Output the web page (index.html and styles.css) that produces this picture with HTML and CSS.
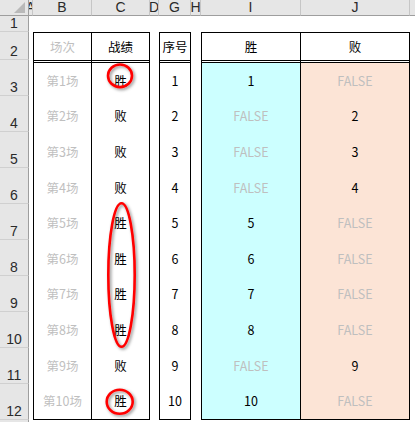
FILE: index.html
```html
<!DOCTYPE html>
<html lang="zh-CN">
<head>
<meta charset="utf-8">
<title>胜败统计</title>
<link rel="stylesheet" href="styles.css">
</head>
<body>
<div class="sheet">
  <div class="corner"><span class="tri"></span></div>
  <div class="colh">A</div>
  <div class="colh">B</div>
  <div class="colh">C</div>
  <div class="colh">D</div>
  <div class="colh">G</div>
  <div class="colh">H</div>
  <div class="colh">I</div>
  <div class="colh">J</div>
  <div class="colh last"></div>

  <div class="rowh">1</div>
  <div class="rowh">2</div>
  <div class="rowh">3</div>
  <div class="rowh">4</div>
  <div class="rowh">5</div>
  <div class="rowh">6</div>
  <div class="rowh">7</div>
  <div class="rowh">8</div>
  <div class="rowh">9</div>
  <div class="rowh">10</div>
  <div class="rowh">11</div>
  <div class="rowh">12</div>
  <div class="rowh end"></div>

  <div class="tbl t-bc">
    <div class="c head dim sep">场次</div><div class="c head">战绩</div>
    <div class="c dim sep">第1场</div><div class="c">胜</div>
    <div class="c dim sep">第2场</div><div class="c">败</div>
    <div class="c dim sep">第3场</div><div class="c">败</div>
    <div class="c dim sep">第4场</div><div class="c">败</div>
    <div class="c dim sep">第5场</div><div class="c">胜</div>
    <div class="c dim sep">第6场</div><div class="c">胜</div>
    <div class="c dim sep">第7场</div><div class="c">胜</div>
    <div class="c dim sep">第8场</div><div class="c">胜</div>
    <div class="c dim sep">第9场</div><div class="c">败</div>
    <div class="c dim sep">第10场</div><div class="c">胜</div>
  </div>

  <div class="tbl t-g">
    <div class="c head">序号</div>
    <div class="c">1</div>
    <div class="c">2</div>
    <div class="c">3</div>
    <div class="c">4</div>
    <div class="c">5</div>
    <div class="c">6</div>
    <div class="c">7</div>
    <div class="c">8</div>
    <div class="c">9</div>
    <div class="c">10</div>
  </div>

  <div class="tbl t-ij">
    <div class="c head sep">胜</div><div class="c head">败</div>
    <div class="c win sep">1</div><div class="c loss dim">FALSE</div>
    <div class="c win sep dim">FALSE</div><div class="c loss">2</div>
    <div class="c win sep dim">FALSE</div><div class="c loss">3</div>
    <div class="c win sep dim">FALSE</div><div class="c loss">4</div>
    <div class="c win sep">5</div><div class="c loss dim">FALSE</div>
    <div class="c win sep">6</div><div class="c loss dim">FALSE</div>
    <div class="c win sep">7</div><div class="c loss dim">FALSE</div>
    <div class="c win sep">8</div><div class="c loss dim">FALSE</div>
    <div class="c win sep dim">FALSE</div><div class="c loss">9</div>
    <div class="c win sep">10</div><div class="c loss dim">FALSE</div>
  </div>

  <svg class="marks" width="415" height="422" viewBox="0 0 415 422" aria-hidden="true">
    <defs>
      <filter id="sh" x="-50%" y="-50%" width="200%" height="200%">
        <feDropShadow dx="1.5" dy="1.5" stdDeviation="1.4" flood-color="#000" flood-opacity="0.45"/>
      </filter>
    </defs>
    <g fill="none" stroke="#ff0000" stroke-width="2.6" filter="url(#sh)">
      <ellipse cx="120" cy="75.8" rx="12" ry="11.3"/>
      <ellipse cx="121.5" cy="275" rx="13.2" ry="71.7"/>
      <ellipse cx="119.7" cy="401.7" rx="13" ry="12"/>
    </g>
  </svg>
</div>
</body>
</html>
```

FILE: styles.css
```css
* { box-sizing: border-box; }

html, body {
  margin: 0;
  padding: 0;
  background: #ffffff;
}

.sheet {
  position: relative;
  width: 415px;
  height: 422px;
  overflow: hidden;
  display: grid;
  grid-template-columns: 29px 4px 59px 58px 9px 32px 10px 100px 109px 1fr;
  grid-template-rows: 16px 16px 28px repeat(10, 36px) 1fr;
  font-family: "Noto Sans CJK SC", "Liberation Sans", sans-serif;
}

.corner {
  position: relative;
  background: #e6e6e6;
  border-right: 1px solid #9e9e9e;
  border-bottom: 1px solid #9e9e9e;
}

.tri {
  position: absolute;
  right: 3px;
  bottom: 2px;
  width: 0;
  height: 0;
  border-left: 11px solid transparent;
  border-bottom: 11px solid #b9b9b9;
}

.colh {
  background: #e6e6e6;
  border-right: 1px solid #c6c6c6;
  border-bottom: 1px solid #9e9e9e;
  font-family: "Liberation Sans", sans-serif;
  font-size: 14px;
  line-height: 15px;
  color: #2a2a2a;
  text-align: center;
  overflow: hidden;
  white-space: nowrap;
  display: flex;
  justify-content: center;
}

.colh.last { border-right: none; }

.rowh {
  grid-column: 1;
  background: #e6e6e6;
  border-right: 1px solid #9e9e9e;
  border-bottom: 1px solid #d0d0d0;
  font-family: "Liberation Sans", sans-serif;
  font-size: 14px;
  line-height: 16px;
  color: #2a2a2a;
  display: flex;
  align-items: flex-end;
  justify-content: center;
}

.rowh.end { border-bottom: none; }

.tbl {
  grid-row: 3 / 14;
  display: grid;
  grid-template-rows: 30px repeat(10, 1fr);
  border: 1px solid #000;
  font-size: 12.5px;
  color: #000;
}

.t-bc {
  grid-column: 3 / 5;
  grid-template-columns: 58px 1fr;
}

.t-g {
  grid-column: 6 / 7;
  grid-template-columns: 1fr;
}

.t-ij {
  grid-column: 8 / 10;
  grid-template-columns: 99px 1fr;
}

.c {
  display: flex;
  align-items: center;
  justify-content: center;
  white-space: nowrap;
  line-height: 14px;
}

.c.head {
  border-bottom: 3px double #000;
  padding-top: 1px;
}

.c.sep { border-right: 1px solid #000; }

.c.dim { color: #bfbfbf; }

.c.win { background: #ccffff; }
.c.loss { background: #fce4d6; }

.marks {
  position: absolute;
  left: 0;
  top: 0;
  pointer-events: none;
}
```
